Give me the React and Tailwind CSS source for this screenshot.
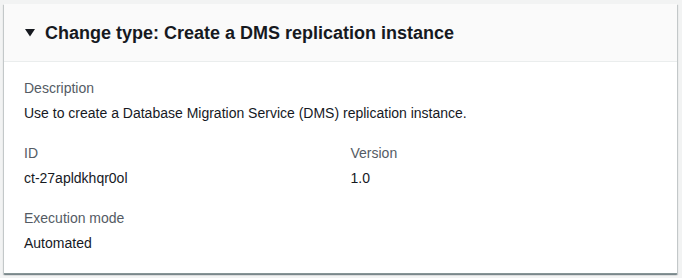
import React from "react";

const Field = ({ label, value }) => (
	<div className="flex flex-col">
		<div className="text-[14px] leading-[20px] text-[#545b64] mb-[5px]">{label}</div>
		<div className="text-[14px] leading-[20px] text-[#16191f]">{value}</div>
	</div>
);

const App = () => {
	return (
		<div
			className="min-h-screen bg-[#f2f3f3] p-[4px] pr-[5px]"
			style={{ fontFamily: '"Liberation Sans", Arial, sans-serif' }}
		>
			<div className="bg-white shadow-[0_1px_1px_0_rgba(0,28,36,0.3),1px_1px_1px_0_rgba(0,28,36,0.15),-1px_1px_1px_0_rgba(0,28,36,0.15)] border-b border-[#879596]">
				{/* header */}
				<div className="bg-[#fafafa] border-b border-[#eaeded] h-[58px] flex items-center pl-[21px]">
					<svg width="10" height="8" viewBox="0 0 10 8" className="mr-[10px] mt-[1px]">
						<path d="M0 0 L10 0 L5 7.5 Z" fill="#16191f" />
					</svg>
					<h2 className="text-[18px] leading-[22px] font-bold text-[#16191f]">
						Change type: Create a DMS replication instance
					</h2>
				</div>
				{/* body */}
				<div className="px-[20px] pt-[16px] pb-[20px] flex flex-col gap-5">
					<Field
						label="Description"
						value="Use to create a Database Migration Service (DMS) replication instance."
					/>
					<div className="grid grid-cols-2 gap-x-5">
						<Field label="ID" value="ct-27apldkhqr0ol" />
						<Field label="Version" value="1.0" />
					</div>
					<Field label="Execution mode" value="Automated" />
				</div>
			</div>
		</div>
	);
};

export default App;
